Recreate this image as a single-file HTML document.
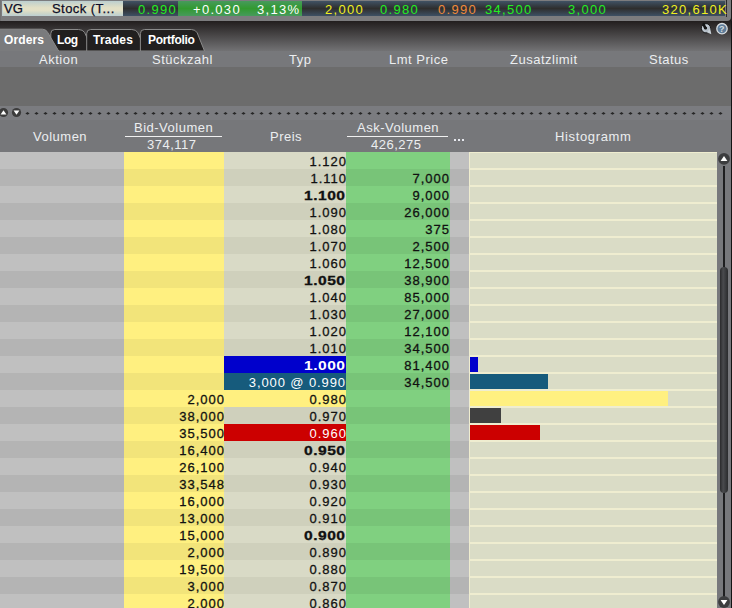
<!DOCTYPE html>
<html><head><meta charset="utf-8">
<style>
*{margin:0;padding:0;box-sizing:border-box}
html,body{width:732px;height:608px;overflow:hidden;background:#1e1c1c}
body{position:relative;font-family:"Liberation Sans",sans-serif;font-size:13px;letter-spacing:0.5px}
.abs{position:absolute}
#top{left:0;top:0;width:731px;height:21px;background:linear-gradient(90deg,#6e6e6e 0,#7c7c7e 1.5px);border-bottom-right-radius:4px}
#topr{left:731px;top:0;width:1px;height:21px;background:#1e1c1c}
.tc{position:absolute;top:1px;height:15px;line-height:15px;white-space:nowrap}
.beige{background:linear-gradient(#bccfd0,#d2d8c8 25%,#e2e0c6 45%,#e3e0c6 62%,#cdd6c8 82%,#bccfd2);border-left:1px solid #c0d0d2;color:#0c0c28;-webkit-text-stroke:0.25px #0c0c28}
.dark{background:linear-gradient(#405264,#2e2e2e 50%,#3e5064)}
.grn{background:linear-gradient(#479a5c,#329a30 50%,#479a5c)}
.tt{position:absolute;top:2px;height:15px;line-height:15px;white-space:nowrap;letter-spacing:1.3px}
#strip{left:0;top:21px;width:732px;height:30px;background:linear-gradient(#221e1e,#727274)}
.tab{top:29px;height:21px;line-height:22px;color:#fff;font-weight:bold;font-size:12px;letter-spacing:0.1px}
#hdr{left:0;top:51px;width:732px;height:16px;background:#77787b;color:#eceef0}
#hdr span{position:absolute;top:1px;line-height:16px}
#empty{left:0;top:67px;width:732px;height:39px;background:#6c6c6c}
#sep{left:0;top:106px;width:732px;height:14px;background:#7b7c80}
#sep i{position:absolute;top:6px;width:3px;height:2px;border-radius:1px;background:#2a2a2a}
#colh{left:0;top:120px;width:732px;height:32px;background:#76777a;color:#eceef0}
#colh span{position:absolute;line-height:16px}
#scr{left:717px;top:152px;width:15px;height:456px;background:#77787c}
.row{position:absolute;left:0;width:717px;height:17px;color:#111}
.c{position:absolute;top:0;height:17px;line-height:19px;text-align:right;padding-right:0;white-space:nowrap;letter-spacing:1.0px;-webkit-text-stroke:0.3px currentColor}
.vol{left:0;width:125px}
.bid{left:124px;width:101px}
.pri{left:224px;width:123px}
.ask{left:346px;width:104px}
.dot{left:450px;width:19px}
.his{left:469px;width:248px;background:#dadcc6;border-top:1px solid #efedd0;border-bottom:1px solid #efedd0;border-left:1px solid #efedd0}
.his i{position:absolute;left:0;top:0;height:15px}
.L .vol,.L .dot{background:#c0c0c0} .D .vol,.D .dot{background:#b4b4b4}
.L .bid{background:#fff080} .D .bid{background:#f2e47a}
.L .pri{background:#d9dac6} .D .pri{background:#cfd0bc}
.L .ask{background:#80d080} .D .ask{background:#78c478}
.b{font-weight:bold;letter-spacing:0.4px;padding-right:1.2px}
.b span{display:inline-block;transform:scaleX(1.2);transform-origin:100% 50%}
.pb{background:#0000cc!important;color:#fff;-webkit-text-stroke:0}
.pt{background:#165b7c!important;color:#fff;letter-spacing:0.9px;-webkit-text-stroke:0;padding-right:1px}
.pr{background:#cc0000!important;color:#fff;-webkit-text-stroke:0}
.py{background:#fff080!important}
</style></head><body>
<div id="top" class="abs"></div>
<div id="topr" class="abs"></div><div class="abs" style="left:726px;top:0;width:1px;height:17px;background:#2a2a2a"></div><div class="abs" style="left:731px;top:21px;width:1px;height:587px;background:#141414;z-index:5"></div>
<div class="tc beige" style="left:2px;width:121px"><span style="position:absolute;left:1px;letter-spacing:0">VG</span><span style="position:absolute;left:49px;letter-spacing:0.45px">Stock (T...</span></div>
<div class="tc dark" style="left:123px;width:55px"></div>
<div class="tc grn" style="left:178px;width:124px"></div>
<div class="tc dark" style="left:302px;width:423px"></div>
<div class="tt" style="left:138px;color:#22ee22">0.990</div>
<div class="tt" style="left:193px;color:#fff">+0.030</div>
<div class="tt" style="left:257px;color:#fff">3,13%</div>
<div class="tt" style="left:325px;color:#f0f020">2,000</div>
<div class="tt" style="left:380px;color:#22ee22">0.980</div>
<div class="tt" style="left:438px;color:#f08a3a">0.990</div>
<div class="tt" style="left:485px;color:#22ee22">34,500</div>
<div class="tt" style="left:568px;color:#22ee22">3,000</div>
<div class="tt" style="left:662px;color:#f0f020">320,610K</div>
<div id="strip" class="abs"></div>
<svg class="abs" style="left:0;top:0" width="732" height="60" viewBox="0 0 732 60">
<defs><linearGradient id="wr" x1="0" y1="0" x2="1" y2="1"><stop offset="0" stop-color="#dfe6ee"/><stop offset="1" stop-color="#9aa4ae"/></linearGradient></defs>
<g stroke="#8a8a8a" stroke-width="1" fill="#211f1f">
<path d="M50.8,51 L50.8,33.5 Q50.8,29.5 54.8,29.5 L78.6,29.5 Q82.6,29.5 84.6,32.5 L93.1,51 Z"/>
<path d="M86.7,51 L86.7,33.5 Q86.7,29.5 90.7,29.5 L131.8,29.5 Q135.8,29.5 137.8,32.5 L146.3,51 Z"/>
<path d="M140.4,51 L140.4,33.5 Q140.4,29.5 144.4,29.5 L191.4,29.5 Q195.4,29.5 197.2,32.8 L204.5,51 Z"/>
</g>
<path d="M-2,51.5 L-2,29.2 L42.5,29.2 Q46.2,29.2 47.8,32.6 L59,51.5 Z" fill="#7a7b7d" stroke="#8a8a8a" stroke-width="1"/>
<g>
<circle cx="706" cy="28.3" r="4.6" fill="url(#wr)" stroke="#0e0e0e" stroke-width="0.9"/>
<path d="M706.8,32.2 L711.3,34.2 L710.2,28.2 Z" fill="#c9d1d8" stroke="none"/>
<path d="M703.6,24.2 L705.2,27.9" stroke="#141414" stroke-width="2.6" stroke-linecap="round"/>
<circle cx="705.6" cy="28.0" r="1.5" fill="#141414"/>
</g>
<circle cx="722" cy="28.7" r="5.2" fill="#5f7c98" stroke="#d9dde0" stroke-width="1.3"/>
<text x="722" y="32.3" font-family="Liberation Sans" font-weight="bold" font-size="9" fill="#d4dade" text-anchor="middle">?</text>
</svg>
<div class="abs tab" style="left:4px">Orders</div>
<div class="abs tab" style="left:57px;letter-spacing:-0.4px">Log</div>
<div class="abs tab" style="left:93px;letter-spacing:0.25px">Trades</div>
<div class="abs tab" style="left:148px;letter-spacing:-0.3px">Portfolio</div>
<div id="hdr" class="abs">
 <span style="left:39px">Aktion</span><span style="left:152px">Stückzahl</span><span style="left:289px">Typ</span><span style="left:389px">Lmt Price</span><span style="left:510px">Zusatzlimit</span><span style="left:649px">Status</span>
</div>
<div id="empty" class="abs"></div>
<div id="sep" class="abs"><svg class="abs" style="left:0;top:0" width="732" height="14"><path d="M25.4,7.4 L27.5,6.1 L29.6,7.4 L27.5,8.7Z" fill="#262626"/><path d="M34.4,7.4 L36.5,6.1 L38.6,7.4 L36.5,8.7Z" fill="#262626"/><path d="M43.4,7.4 L45.5,6.1 L47.6,7.4 L45.5,8.7Z" fill="#262626"/><path d="M52.4,7.4 L54.5,6.1 L56.6,7.4 L54.5,8.7Z" fill="#262626"/><path d="M61.4,7.4 L63.5,6.1 L65.6,7.4 L63.5,8.7Z" fill="#262626"/><path d="M70.4,7.4 L72.5,6.1 L74.6,7.4 L72.5,8.7Z" fill="#262626"/><path d="M79.4,7.4 L81.5,6.1 L83.6,7.4 L81.5,8.7Z" fill="#262626"/><path d="M88.4,7.4 L90.5,6.1 L92.6,7.4 L90.5,8.7Z" fill="#262626"/><path d="M97.4,7.4 L99.5,6.1 L101.6,7.4 L99.5,8.7Z" fill="#262626"/><path d="M106.4,7.4 L108.5,6.1 L110.6,7.4 L108.5,8.7Z" fill="#262626"/><path d="M115.4,7.4 L117.5,6.1 L119.6,7.4 L117.5,8.7Z" fill="#262626"/><path d="M124.4,7.4 L126.5,6.1 L128.6,7.4 L126.5,8.7Z" fill="#262626"/><path d="M133.4,7.4 L135.5,6.1 L137.6,7.4 L135.5,8.7Z" fill="#262626"/><path d="M142.4,7.4 L144.5,6.1 L146.6,7.4 L144.5,8.7Z" fill="#262626"/><path d="M151.4,7.4 L153.5,6.1 L155.6,7.4 L153.5,8.7Z" fill="#262626"/><path d="M160.4,7.4 L162.5,6.1 L164.6,7.4 L162.5,8.7Z" fill="#262626"/><path d="M169.4,7.4 L171.5,6.1 L173.6,7.4 L171.5,8.7Z" fill="#262626"/><path d="M178.4,7.4 L180.5,6.1 L182.6,7.4 L180.5,8.7Z" fill="#262626"/><path d="M187.4,7.4 L189.5,6.1 L191.6,7.4 L189.5,8.7Z" fill="#262626"/><path d="M196.4,7.4 L198.5,6.1 L200.6,7.4 L198.5,8.7Z" fill="#262626"/><path d="M205.4,7.4 L207.5,6.1 L209.6,7.4 L207.5,8.7Z" fill="#262626"/><path d="M214.4,7.4 L216.5,6.1 L218.6,7.4 L216.5,8.7Z" fill="#262626"/><path d="M223.4,7.4 L225.5,6.1 L227.6,7.4 L225.5,8.7Z" fill="#262626"/><path d="M232.4,7.4 L234.5,6.1 L236.6,7.4 L234.5,8.7Z" fill="#262626"/><path d="M241.4,7.4 L243.5,6.1 L245.6,7.4 L243.5,8.7Z" fill="#262626"/><path d="M250.4,7.4 L252.5,6.1 L254.6,7.4 L252.5,8.7Z" fill="#262626"/><path d="M259.4,7.4 L261.5,6.1 L263.6,7.4 L261.5,8.7Z" fill="#262626"/><path d="M268.4,7.4 L270.5,6.1 L272.6,7.4 L270.5,8.7Z" fill="#262626"/><path d="M277.4,7.4 L279.5,6.1 L281.6,7.4 L279.5,8.7Z" fill="#262626"/><path d="M286.4,7.4 L288.5,6.1 L290.6,7.4 L288.5,8.7Z" fill="#262626"/><path d="M295.4,7.4 L297.5,6.1 L299.6,7.4 L297.5,8.7Z" fill="#262626"/><path d="M304.4,7.4 L306.5,6.1 L308.6,7.4 L306.5,8.7Z" fill="#262626"/><path d="M313.4,7.4 L315.5,6.1 L317.6,7.4 L315.5,8.7Z" fill="#262626"/><path d="M322.4,7.4 L324.5,6.1 L326.6,7.4 L324.5,8.7Z" fill="#262626"/><path d="M331.4,7.4 L333.5,6.1 L335.6,7.4 L333.5,8.7Z" fill="#262626"/><path d="M340.4,7.4 L342.5,6.1 L344.6,7.4 L342.5,8.7Z" fill="#262626"/><path d="M349.4,7.4 L351.5,6.1 L353.6,7.4 L351.5,8.7Z" fill="#262626"/><path d="M358.4,7.4 L360.5,6.1 L362.6,7.4 L360.5,8.7Z" fill="#262626"/><path d="M367.4,7.4 L369.5,6.1 L371.6,7.4 L369.5,8.7Z" fill="#262626"/><path d="M376.4,7.4 L378.5,6.1 L380.6,7.4 L378.5,8.7Z" fill="#262626"/><path d="M385.4,7.4 L387.5,6.1 L389.6,7.4 L387.5,8.7Z" fill="#262626"/><path d="M394.4,7.4 L396.5,6.1 L398.6,7.4 L396.5,8.7Z" fill="#262626"/><path d="M403.4,7.4 L405.5,6.1 L407.6,7.4 L405.5,8.7Z" fill="#262626"/><path d="M412.4,7.4 L414.5,6.1 L416.6,7.4 L414.5,8.7Z" fill="#262626"/><path d="M421.4,7.4 L423.5,6.1 L425.6,7.4 L423.5,8.7Z" fill="#262626"/><path d="M430.4,7.4 L432.5,6.1 L434.6,7.4 L432.5,8.7Z" fill="#262626"/><path d="M439.4,7.4 L441.5,6.1 L443.6,7.4 L441.5,8.7Z" fill="#262626"/><path d="M448.4,7.4 L450.5,6.1 L452.6,7.4 L450.5,8.7Z" fill="#262626"/><path d="M457.4,7.4 L459.5,6.1 L461.6,7.4 L459.5,8.7Z" fill="#262626"/><path d="M466.4,7.4 L468.5,6.1 L470.6,7.4 L468.5,8.7Z" fill="#262626"/><path d="M475.4,7.4 L477.5,6.1 L479.6,7.4 L477.5,8.7Z" fill="#262626"/><path d="M484.4,7.4 L486.5,6.1 L488.6,7.4 L486.5,8.7Z" fill="#262626"/><path d="M493.4,7.4 L495.5,6.1 L497.6,7.4 L495.5,8.7Z" fill="#262626"/><path d="M502.4,7.4 L504.5,6.1 L506.6,7.4 L504.5,8.7Z" fill="#262626"/><path d="M511.4,7.4 L513.5,6.1 L515.6,7.4 L513.5,8.7Z" fill="#262626"/><path d="M520.4,7.4 L522.5,6.1 L524.6,7.4 L522.5,8.7Z" fill="#262626"/><path d="M529.4,7.4 L531.5,6.1 L533.6,7.4 L531.5,8.7Z" fill="#262626"/><path d="M538.4,7.4 L540.5,6.1 L542.6,7.4 L540.5,8.7Z" fill="#262626"/><path d="M547.4,7.4 L549.5,6.1 L551.6,7.4 L549.5,8.7Z" fill="#262626"/><path d="M556.4,7.4 L558.5,6.1 L560.6,7.4 L558.5,8.7Z" fill="#262626"/><path d="M565.4,7.4 L567.5,6.1 L569.6,7.4 L567.5,8.7Z" fill="#262626"/><path d="M574.4,7.4 L576.5,6.1 L578.6,7.4 L576.5,8.7Z" fill="#262626"/><path d="M583.4,7.4 L585.5,6.1 L587.6,7.4 L585.5,8.7Z" fill="#262626"/><path d="M592.4,7.4 L594.5,6.1 L596.6,7.4 L594.5,8.7Z" fill="#262626"/><path d="M601.4,7.4 L603.5,6.1 L605.6,7.4 L603.5,8.7Z" fill="#262626"/><path d="M610.4,7.4 L612.5,6.1 L614.6,7.4 L612.5,8.7Z" fill="#262626"/><path d="M619.4,7.4 L621.5,6.1 L623.6,7.4 L621.5,8.7Z" fill="#262626"/><path d="M628.4,7.4 L630.5,6.1 L632.6,7.4 L630.5,8.7Z" fill="#262626"/><path d="M637.4,7.4 L639.5,6.1 L641.6,7.4 L639.5,8.7Z" fill="#262626"/><path d="M646.4,7.4 L648.5,6.1 L650.6,7.4 L648.5,8.7Z" fill="#262626"/><path d="M655.4,7.4 L657.5,6.1 L659.6,7.4 L657.5,8.7Z" fill="#262626"/><path d="M664.4,7.4 L666.5,6.1 L668.6,7.4 L666.5,8.7Z" fill="#262626"/><path d="M673.4,7.4 L675.5,6.1 L677.6,7.4 L675.5,8.7Z" fill="#262626"/><path d="M682.4,7.4 L684.5,6.1 L686.6,7.4 L684.5,8.7Z" fill="#262626"/><path d="M691.4,7.4 L693.5,6.1 L695.6,7.4 L693.5,8.7Z" fill="#262626"/><path d="M700.4,7.4 L702.5,6.1 L704.6,7.4 L702.5,8.7Z" fill="#262626"/><path d="M709.4,7.4 L711.5,6.1 L713.6,7.4 L711.5,8.7Z" fill="#262626"/><path d="M718.4,7.4 L720.5,6.1 L722.6,7.4 L720.5,8.7Z" fill="#262626"/></svg><svg class="abs" style="left:0;top:0" width="30" height="14"><circle cx="3.5" cy="6.5" r="4.6" fill="#3c3c3c"/><path d="M0.6,8.6 L6.4,8.6 L3.5,4.2 Z" fill="#fff"/><circle cx="16.5" cy="6.5" r="4.6" fill="#3c3c3c"/><path d="M13.6,4.4 L19.4,4.4 L16.5,8.8 Z" fill="#fff"/></svg></div>
<div id="colh" class="abs">
 <span style="left:33px;top:9px">Volumen</span>
 <span style="left:134px;top:0">Bid-Volumen</span>
 <div class="abs" style="left:125px;top:16px;width:97px;height:1px;background:#f0f0f0"></div>
 <span style="left:147px;top:17px">374,117</span>
 <span style="left:270px;top:9px">Preis</span>
 <span style="left:357px;top:0">Ask-Volumen</span>
 <div class="abs" style="left:347px;top:16px;width:101px;height:1px;background:#f0f0f0"></div>
 <span style="left:371px;top:17px">426,275</span>
 <i class="abs" style="left:454px;top:19px;width:2px;height:2px;background:#e8eaf0"></i><i class="abs" style="left:458px;top:19px;width:2px;height:2px;background:#e8eaf0"></i><i class="abs" style="left:462px;top:19px;width:2px;height:2px;background:#e8eaf0"></i>
 <span style="left:555px;top:9px;letter-spacing:0.65px">Histogramm</span>
</div>
<div id="scr" class="abs"></div>
<svg class="abs" style="left:717px;top:152px" width="15" height="456">
<rect x="14" y="0" width="1" height="456" fill="#141414"/>
<circle cx="7" cy="6.9" r="5.9" fill="#3c3d3f"/><path d="M3.6,9 L10.4,9 L7,4 Z" fill="#fff"/>
<rect x="6" y="14" width="2" height="432" fill="#1e1e20"/>
<defs><linearGradient id="th" x1="0" x2="1"><stop offset="0" stop-color="#2a2a2c"/><stop offset="0.4" stop-color="#4a4b4e"/><stop offset="1" stop-color="#2a2b2d"/></linearGradient></defs>
<rect x="3" y="115" width="8" height="226" rx="4" fill="url(#th)"/>
<circle cx="7" cy="450" r="5.9" fill="#3c3d3f"/><path d="M3.6,448 L10.4,448 L7,453 Z" fill="#fff"/>
</svg>
<div class="row L" style="top:152px"><div class="c vol"></div><div class="c bid"></div><div class="c pri">1.120</div><div class="c ask"></div><div class="c dot"></div><div class="c his"></div></div>
<div class="row D" style="top:169px"><div class="c vol"></div><div class="c bid"></div><div class="c pri">1.110</div><div class="c ask">7,000</div><div class="c dot"></div><div class="c his"></div></div>
<div class="row L" style="top:186px"><div class="c vol"></div><div class="c bid"></div><div class="c pri b"><span>1.100</span></div><div class="c ask">9,000</div><div class="c dot"></div><div class="c his"></div></div>
<div class="row D" style="top:203px"><div class="c vol"></div><div class="c bid"></div><div class="c pri">1.090</div><div class="c ask">26,000</div><div class="c dot"></div><div class="c his"></div></div>
<div class="row L" style="top:220px"><div class="c vol"></div><div class="c bid"></div><div class="c pri">1.080</div><div class="c ask">375</div><div class="c dot"></div><div class="c his"></div></div>
<div class="row D" style="top:237px"><div class="c vol"></div><div class="c bid"></div><div class="c pri">1.070</div><div class="c ask">2,500</div><div class="c dot"></div><div class="c his"></div></div>
<div class="row L" style="top:254px"><div class="c vol"></div><div class="c bid"></div><div class="c pri">1.060</div><div class="c ask">12,500</div><div class="c dot"></div><div class="c his"></div></div>
<div class="row D" style="top:271px"><div class="c vol"></div><div class="c bid"></div><div class="c pri b"><span>1.050</span></div><div class="c ask">38,900</div><div class="c dot"></div><div class="c his"></div></div>
<div class="row L" style="top:288px"><div class="c vol"></div><div class="c bid"></div><div class="c pri">1.040</div><div class="c ask">85,000</div><div class="c dot"></div><div class="c his"></div></div>
<div class="row D" style="top:305px"><div class="c vol"></div><div class="c bid"></div><div class="c pri">1.030</div><div class="c ask">27,000</div><div class="c dot"></div><div class="c his"></div></div>
<div class="row L" style="top:322px"><div class="c vol"></div><div class="c bid"></div><div class="c pri">1.020</div><div class="c ask">12,100</div><div class="c dot"></div><div class="c his"></div></div>
<div class="row D" style="top:339px"><div class="c vol"></div><div class="c bid"></div><div class="c pri">1.010</div><div class="c ask">34,500</div><div class="c dot"></div><div class="c his"></div></div>
<div class="row L" style="top:356px"><div class="c vol"></div><div class="c bid"></div><div class="c pri pb b"><span>1.000</span></div><div class="c ask">81,400</div><div class="c dot"></div><div class="c his"><i style="width:8px;background:#0000cc"></i></div></div>
<div class="row D" style="top:373px"><div class="c vol"></div><div class="c bid"></div><div class="c pri pt">3,000 @ 0.990</div><div class="c ask">34,500</div><div class="c dot"></div><div class="c his"><i style="width:78px;background:#165b7c"></i></div></div>
<div class="row L" style="top:390px"><div class="c vol"></div><div class="c bid">2,000</div><div class="c pri py">0.980</div><div class="c ask"></div><div class="c dot"></div><div class="c his"><i style="width:198px;background:#fff080"></i></div></div>
<div class="row D" style="top:407px"><div class="c vol"></div><div class="c bid">38,000</div><div class="c pri">0.970</div><div class="c ask"></div><div class="c dot"></div><div class="c his"><i style="width:31px;background:#404040"></i></div></div>
<div class="row L" style="top:424px"><div class="c vol"></div><div class="c bid">35,500</div><div class="c pri pr">0.960</div><div class="c ask"></div><div class="c dot"></div><div class="c his"><i style="width:70px;background:#cc0000"></i></div></div>
<div class="row D" style="top:441px"><div class="c vol"></div><div class="c bid">16,400</div><div class="c pri b"><span>0.950</span></div><div class="c ask"></div><div class="c dot"></div><div class="c his"></div></div>
<div class="row L" style="top:458px"><div class="c vol"></div><div class="c bid">26,100</div><div class="c pri">0.940</div><div class="c ask"></div><div class="c dot"></div><div class="c his"></div></div>
<div class="row D" style="top:475px"><div class="c vol"></div><div class="c bid">33,548</div><div class="c pri">0.930</div><div class="c ask"></div><div class="c dot"></div><div class="c his"></div></div>
<div class="row L" style="top:492px"><div class="c vol"></div><div class="c bid">16,000</div><div class="c pri">0.920</div><div class="c ask"></div><div class="c dot"></div><div class="c his"></div></div>
<div class="row D" style="top:509px"><div class="c vol"></div><div class="c bid">13,000</div><div class="c pri">0.910</div><div class="c ask"></div><div class="c dot"></div><div class="c his"></div></div>
<div class="row L" style="top:526px"><div class="c vol"></div><div class="c bid">15,000</div><div class="c pri b"><span>0.900</span></div><div class="c ask"></div><div class="c dot"></div><div class="c his"></div></div>
<div class="row D" style="top:543px"><div class="c vol"></div><div class="c bid">2,000</div><div class="c pri">0.890</div><div class="c ask"></div><div class="c dot"></div><div class="c his"></div></div>
<div class="row L" style="top:560px"><div class="c vol"></div><div class="c bid">19,500</div><div class="c pri">0.880</div><div class="c ask"></div><div class="c dot"></div><div class="c his"></div></div>
<div class="row D" style="top:577px"><div class="c vol"></div><div class="c bid">3,000</div><div class="c pri">0.870</div><div class="c ask"></div><div class="c dot"></div><div class="c his"></div></div>
<div class="row L" style="top:594px"><div class="c vol"></div><div class="c bid">2,000</div><div class="c pri">0.860</div><div class="c ask"></div><div class="c dot"></div><div class="c his"></div></div>
</body></html>
